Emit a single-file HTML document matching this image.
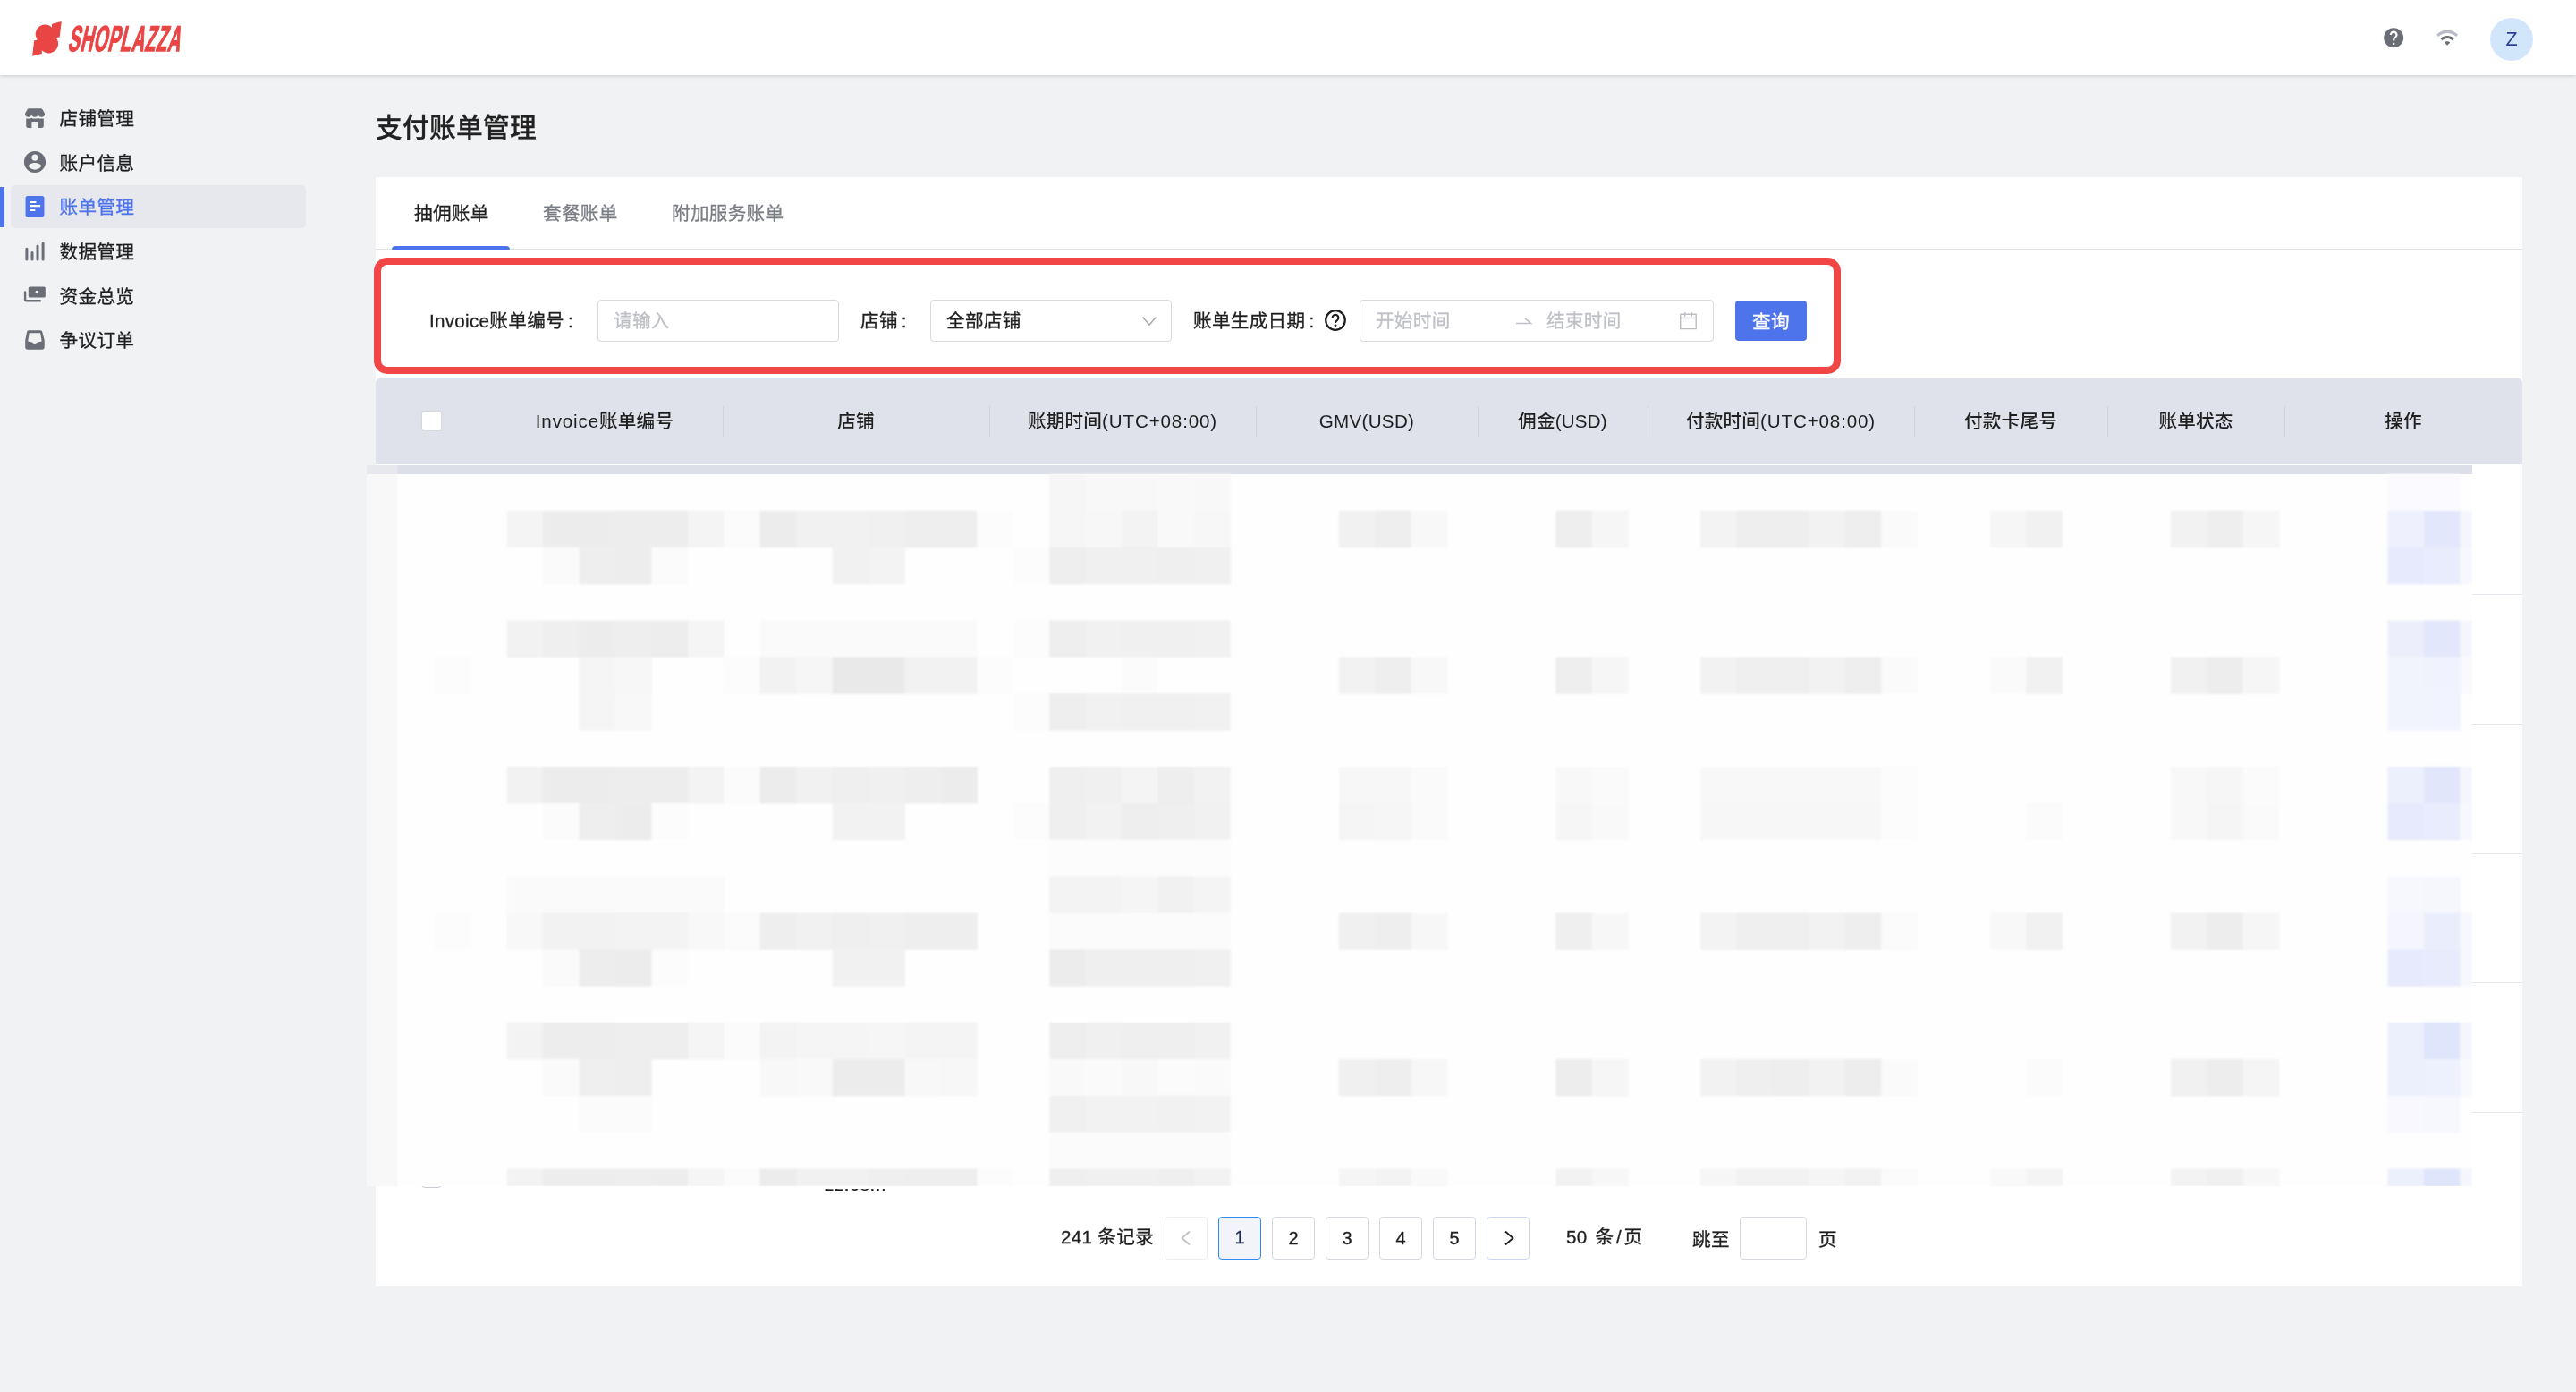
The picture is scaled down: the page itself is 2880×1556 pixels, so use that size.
<!DOCTYPE html>
<html lang="zh-CN">
<head>
<meta charset="utf-8">
<title>支付账单管理</title>
<style>
*{box-sizing:border-box;margin:0;padding:0}
html,body{width:2880px;height:1556px;overflow:hidden}
body{background:#f1f2f4;font-family:"Liberation Sans","Noto Sans CJK SC",sans-serif;color:#1f1f1f;position:relative;font-size:21px;-webkit-text-stroke:.3px}
#root{position:absolute;left:0;top:0;width:2880px;height:1556px;will-change:transform}
.abs{position:absolute}
svg{display:block}
/* header */
#hdr{position:absolute;left:0;top:0;width:2880px;height:84px;background:#fff;box-shadow:0 1px 4px rgba(0,0,0,.17);z-index:5}
#logo-ico{position:absolute;left:34px;top:22px}
#logo-txt{position:absolute;left:84px;top:19.3px;font:bold 40px/48px "Liberation Sans",sans-serif;color:#ea4545;transform-origin:0 0;transform:skewX(-13deg) scaleX(.487);white-space:nowrap;-webkit-text-stroke:1.5px #ea4545;letter-spacing:1.6px}
#help{position:absolute;left:2662.8px;top:28.8px}
#wifi{position:absolute;left:2722.9px;top:29.2px}
#avatar{position:absolute;left:2784px;top:20px;width:48px;height:48px;border-radius:50%;background:#d1e6fa;color:#2a3f98;font-size:21.5px;line-height:49px;text-align:center;-webkit-text-stroke:0}
/* sidebar */
#nav{position:absolute;left:0;top:0;width:360px}
.ni{position:absolute;left:12px;width:330px;height:48px;border-radius:5px;font-size:20.6px;line-height:48px;color:#1f1f1f;letter-spacing:.3px}
.ni span{position:absolute;left:54.6px;top:1.4px;white-space:nowrap}
.ni svg{position:absolute;left:13px;top:10px}
.ni.on{background:#e7e8ed;color:#4e74ec}
#navbar{position:absolute;left:0;top:209px;width:5px;height:45px;background:#4e74ec}
/* main */
h1{position:absolute;left:420px;top:120.6px;font-size:29.7px;line-height:44px;font-weight:500;color:#222;white-space:nowrap;letter-spacing:.3px}
#card{position:absolute;left:420px;top:198px;width:2400px;height:1240px;background:#fff}

/* tabs */
#tabs{position:absolute;left:420px;top:198px;width:2400px;height:81px;border-bottom:1px solid #e4e5e9}
.tab{position:absolute;top:0;height:81px;line-height:81px;font-size:20.6px;color:#7a7d85;white-space:nowrap;letter-spacing:.3px}
.tab.on{color:#1f1f1f}
#ink{position:absolute;left:438px;top:275px;width:132px;height:4px;background:#4e74ec;border-radius:4px 4px 0 0}
/* filter */
#redbox{position:absolute;left:418px;top:288px;width:1640px;height:130px;border:8px solid #f24646;border-radius:15px;z-index:3}
.lbl{position:absolute;top:335.4px;height:47px;line-height:47px;font-size:20.6px;color:#1f1f1f;white-space:nowrap;letter-spacing:.3px}
.inp{position:absolute;top:335px;height:47px;border:1px solid #d8d9dd;border-radius:4px;background:#fff;font-size:20.6px;line-height:45px;color:#bfc1c7;white-space:nowrap;letter-spacing:.3px}
.inp span{position:absolute;top:.4px}
#btn{position:absolute;left:1940px;top:336px;width:80px;height:45px;border-radius:5px;background:#4e74ec;color:#fff;font-size:20.6px;line-height:47px;text-align:center;letter-spacing:.5px;border-radius:4px}
/* table */
#thead{position:absolute;left:420px;top:423px;width:2400px;height:96px;background:#dfe2ea;border-radius:5px 5px 0 0}
.th{position:absolute;top:0;height:96px;line-height:96px;text-align:center;font-size:20.6px;font-weight:500;color:#1f1f1f;white-space:nowrap;letter-spacing:.2px;-webkit-text-stroke:0}
.sep{position:absolute;top:31px;width:1px;height:34px;background:#cfd2da}
#cb{position:absolute;left:50.5px;top:36px;width:23px;height:23px;background:#fff;border:1px solid #d4d7de;border-radius:3px}
.rl{position:absolute;left:2764px;width:56px;height:1px;background:#e6e7ec}
/* pagination */
.pg{position:absolute;top:1360px;width:48px;height:48px;border:1px solid #d6d8dd;border-radius:4px;background:#fff;font-size:20px;line-height:46px;text-align:center;color:#1f1f1f}
.pg.on{border:1.6px solid #2f8cf5;background:#f3f4f9;line-height:44.8px;color:#1f2a4d}
.pt{position:absolute;top:1359.4px;height:48px;line-height:48px;font-size:20.6px;color:#1f1f1f;white-space:nowrap;letter-spacing:.3px}
#mosaic{position:absolute;left:410px;top:520px;z-index:2}
.lt{letter-spacing:.85px}
@media (max-width:2000px){html,body{width:1440px;height:778px}#root{zoom:.5}}
</style>
</head>
<body>
<div id="root">
<div id="hdr">
  <svg id="logo-ico" width="38" height="44" viewBox="0 0 38 44"><g fill="#ea4545"><circle cx="16.4" cy="16.3" r="10.7"/><circle cx="20.4" cy="26.7" r="10.7"/><path d="M24 4.7L34.8 2L32.6 19.4L24 21Z"/><path d="M4.2 23.3L2.1 40.8L12.8 38L13 22Z"/></g></svg>
  <div id="logo-txt">SHOPLAZZA</div>
  <svg id="help" width="26.4" height="26.4" viewBox="0 0 24 24"><path fill="#6b6e76" d="M12 2C6.48 2 2 6.48 2 12s4.48 10 10 10 10-4.48 10-10S17.52 2 12 2zm1 17h-2v-2h2v2zm2.07-7.75l-.9.92C13.45 12.9 13 13.5 13 15h-2v-.5c0-1.1.45-2.1 1.17-2.83l1.24-1.26c.37-.36.59-.86.59-1.41 0-1.1-.9-2-2-2s-2 .9-2 2H8c0-2.21 1.79-4 4-4s4 1.79 4 4c0 .88-.36 1.68-.93 2.25z"/></svg>
  <svg id="wifi" width="26.2" height="26.2" viewBox="0 0 24 24"><path fill="#b9bcc4" d="M1 9l2 2c4.97-4.97 13.03-4.97 18 0l2-2C16.93 2.93 7.08 2.93 1 9z"/><path fill="#6b6e76" d="M9 17l3 3 3-3c-1.65-1.66-4.34-1.66-6 0zm-4-4l2 2c2.76-2.76 7.24-2.76 10 0l2-2C15.14 9.14 8.87 9.14 5 13z"/></svg>
  <div id="avatar">Z</div>
</div>
<div id="nav">
  <div id="navbar"></div>
  <div class="ni" style="top:107.80px"><svg width="28" height="28" viewBox="0 0 28 28"><path fill="#6b6e76" d="M7.4 3.16H20.6Q22 3.16 22.6 4.4L25.1 9.05A3.7 3.7 0 0 1 17.7 9.05A3.675 3.675 0 0 1 10.35 9.05A3.675 3.675 0 0 1 3 9.05L5.4 4.4Q6 3.16 7.4 3.16Z"/><path fill="#6b6e76" d="M4.2 14.6H9L10.4 13.8L11.8 14.6H16.1L17.5 13.8L18.9 14.6H23.8V22.5a2.5 2.5 0 0 1-2.5 2.5H17.5V18.7a.6.6 0 0 0-.6-.6H11a.6.6 0 0 0-.6.6V25H6.7a2.5 2.5 0 0 1-2.5-2.5Z"/></svg><span>店铺管理</span></div>
  <div class="ni" style="top:157.42px"><svg width="28" height="28" viewBox="0 0 28 28"><path fill="#6b6e76" transform="translate(14 14) scale(1.21) translate(-12 -12)" d="M12 2C6.48 2 2 6.48 2 12s4.48 10 10 10 10-4.48 10-10S17.52 2 12 2zm0 3c1.66 0 3 1.34 3 3s-1.34 3-3 3-3-1.34-3-3 1.34-3 3-3zm0 14.2c-2.5 0-4.71-1.28-6-3.22.03-1.99 4-3.08 6-3.08 1.99 0 5.97 1.09 6 3.08-1.29 1.94-3.5 3.22-6 3.22z"/></svg><span>账户信息</span></div>
  <div class="ni on" style="top:207.04px"><svg width="28" height="28" viewBox="0 0 28 28"><rect x="3.55" y="1.9" width="20.9" height="24.2" rx="2.5" fill="#4e74ec"/><path fill="#fff" d="M8.25 7.9h7.2v2.1h-7.2zM8.25 12.1h11.9v2.2H8.25zM8.25 17h6.1v2h-6.1z"/></svg><span>账单管理</span></div>
  <div class="ni" style="top:256.66px"><svg width="28" height="28" viewBox="0 0 28 28"><path fill="none" stroke="#6b6e76" stroke-width="3" stroke-linecap="round" d="M4.9 11.2V23M11 15.6V23M17 8.1V23M23.1 5V23"/></svg><span>数据管理</span></div>
  <div class="ni" style="top:306.28px"><svg style="margin-top:-.9px" width="28" height="28" viewBox="0 0 28 28"><rect x="6.8" y="5.4" width="19" height="12.2" rx="1.6" fill="#6b6e76"/><circle cx="16.3" cy="11.6" r="1.75" fill="#f7f7f8"/><path fill="none" stroke="#6b6e76" stroke-width="2.4" stroke-linejoin="round" stroke-linecap="round" d="M3.1 11.4V19.8a1.5 1.5 0 0 0 1.5 1.5H19.8"/></svg><span>资金总览</span></div>
  <div class="ni" style="top:355.90px"><svg width="28" height="28" viewBox="0 0 28 28"><path fill="#6b6e76" fill-rule="evenodd" d="M6.8 3.3H20.4Q21.9 3.3 22.4 5.2L24.7 14.2V22a2.8 2.8 0 0 1-2.8 2.8H6a2.8 2.8 0 0 1-2.8-2.8V14.2L5.06 5.2Q5.5 3.3 6.8 3.3ZM7.7 6.3H20.1L21.7 15.4L17.3 16.4L13.7 18.4L10.7 16.4L6.2 15.4Z"/></svg><span>争议订单</span></div>
</div>
<h1>支付账单管理</h1>
<div id="card"></div>
<div id="tabs">
  <div class="tab on" style="left:43px">抽佣账单</div>
  <div class="tab" style="left:187px">套餐账单</div>
  <div class="tab" style="left:331px">附加服务账单</div>
</div>
<div id="ink"></div>
<div id="filter">
  <div class="lbl" style="left:480px">Invoice账单编号<span style="margin-left:4px">:</span></div>
  <div class="inp" style="left:668px;width:270px"><span style="left:17px">请输入</span></div>
  <div class="lbl" style="left:962px">店铺<span style="margin-left:4px">:</span></div>
  <div class="inp" style="left:1040px;width:270px"><span style="left:17px;color:#1f1f1f">全部店铺</span>
    <svg class="abs" style="left:235px;top:17px" width="18" height="12" viewBox="0 0 18 12"><path d="M1.5 1.5L9 10L16.5 1.5" fill="none" stroke="#a9abb1" stroke-width="1.5"/></svg></div>
  <div class="lbl" style="left:1334px">账单生成日期<span style="margin-left:4px">:</span></div>
  <svg class="abs" style="left:1479.8px;top:344.9px" width="26" height="26" viewBox="0 0 26 26"><circle cx="13" cy="13" r="10.8" fill="none" stroke="#1f1f1f" stroke-width="2.2"/><path d="M9.6 10.3a3.4 3.4 0 1 1 5.3 2.8c-1.2.8-1.9 1.4-1.9 2.9" fill="none" stroke="#1f1f1f" stroke-width="2.1"/><circle cx="13" cy="18.8" r="1.4" fill="#1f1f1f"/></svg>
  <div class="inp" style="left:1520px;width:396px"><span style="left:17px">开始时间</span><span style="left:208px">结束时间</span>
    <svg class="abs" style="left:173px;top:16px" width="22" height="14" viewBox="0 0 22 14"><path d="M1 9.5H17.5L11 3.8" fill="none" stroke="#bfc1c7" stroke-width="1.6"/></svg>
    <svg class="abs" style="left:356px;top:12px" width="22" height="22" viewBox="0 0 22 22"><path d="M1.7 3.3H19.2V19.6H1.7ZM1.7 7.5H19.2M6.7 1V5.7M14.3 1V5.7" fill="none" stroke="#bcbec4" stroke-width="1.4"/></svg></div>
  <div id="btn">查询</div>
</div>
<div id="redbox"></div>
<div id="thead">
  <div id="cb"></div>
  <div class="th" style="left:124px;width:264px"><span class="lt">Invoice</span>账单编号</div>
  <div class="th" style="left:388px;width:298px">店铺</div>
  <div class="th" style="left:686px;width:298px">账期时间<span class="lt">(UTC+08:00)</span></div>
  <div class="th" style="left:984px;width:248px"><span style="letter-spacing:.3px">GMV(USD)</span></div>
  <div class="th" style="left:1232px;width:190px">佣金(USD)</div>
  <div class="th" style="left:1422px;width:298px">付款时间<span class="lt">(UTC+08:00)</span></div>
  <div class="th" style="left:1720px;width:216px">付款卡尾号</div>
  <div class="th" style="left:1936px;width:198px">账单状态</div>
  <div class="th" style="left:2134px;width:266px">操作</div>
  <div class="sep" style="left:388px"></div><div class="sep" style="left:686px"></div><div class="sep" style="left:984px"></div><div class="sep" style="left:1232px"></div><div class="sep" style="left:1422px"></div><div class="sep" style="left:1720px"></div><div class="sep" style="left:1936px"></div><div class="sep" style="left:2134px"></div>
</div>
<div class="rl" style="top:664px"></div><div class="rl" style="top:809px"></div><div class="rl" style="top:954px"></div><div class="rl" style="top:1098px"></div><div class="rl" style="top:1243px"></div>
<div class="abs" style="left:470.5px;top:1305px;width:23px;height:23px;border:1px solid #c9ccd3;border-radius:4px;background:#fff"></div>
<div class="abs" style="left:922px;top:1329px;width:72px;height:2.2px;overflow:hidden"><div style="position:absolute;left:0;top:-16.6px;font-size:20.6px;line-height:24px;white-space:nowrap;color:#1f1f1f;letter-spacing:.6px">zz.com</div></div>
<svg id="mosaic" width="2354" height="806" viewBox="410 520 2354 806">
<rect x="410" y="520" width="2354" height="806" fill="#fefefe"/>
<rect x="410" y="520" width="2354" height="10.0" fill="#dddfe8"/>
<rect x="410" y="520" width="34.5" height="10.0" fill="#e7e8ed"/>
<rect x="410" y="530.0" width="34.5" height="796.0" fill="#f8f8f8"/>
<g filter="url(#mb)">
<rect x="1173.2" y="530.0" width="40.9" height="41.4" fill="#f6f6f6"/>
<rect x="1213.7" y="530.0" width="81.4" height="41.4" fill="#f8f8f8"/>
<rect x="1294.5" y="530.0" width="40.9" height="41.4" fill="#f9f9f9"/>
<rect x="1335.0" y="530.0" width="40.9" height="41.4" fill="#f8f8f8"/>
<rect x="2669.5" y="530.0" width="40.9" height="41.4" fill="#fafaff"/>
<rect x="2709.9" y="530.0" width="40.9" height="41.4" fill="#fbfbff"/>
<rect x="566.6" y="570.9" width="40.9" height="41.4" fill="#f4f4f4"/>
<rect x="607.1" y="570.9" width="81.4" height="41.4" fill="#ececec"/>
<rect x="687.9" y="570.9" width="81.4" height="41.4" fill="#ededed"/>
<rect x="768.8" y="570.9" width="40.9" height="41.4" fill="#f4f4f4"/>
<rect x="809.3" y="570.9" width="40.9" height="41.4" fill="#fbfbfb"/>
<rect x="849.7" y="570.9" width="40.9" height="41.4" fill="#ececec"/>
<rect x="890.1" y="570.9" width="81.4" height="41.4" fill="#f1f1f1"/>
<rect x="971.0" y="570.9" width="40.9" height="41.4" fill="#f0f0f0"/>
<rect x="1011.5" y="570.9" width="81.4" height="41.4" fill="#eeeeee"/>
<rect x="1092.3" y="570.9" width="40.9" height="41.4" fill="#fcfcfc"/>
<rect x="1173.2" y="570.9" width="40.9" height="41.4" fill="#f6f6f6"/>
<rect x="1213.7" y="570.9" width="40.9" height="41.4" fill="#f7f7f7"/>
<rect x="1254.1" y="570.9" width="40.9" height="41.4" fill="#f3f3f3"/>
<rect x="1294.5" y="570.9" width="40.9" height="41.4" fill="#f9f9f9"/>
<rect x="1335.0" y="570.9" width="40.9" height="41.4" fill="#f7f7f7"/>
<rect x="1496.7" y="570.9" width="40.9" height="41.4" fill="#f1f1f1"/>
<rect x="1537.2" y="570.9" width="40.9" height="41.4" fill="#eeeeee"/>
<rect x="1577.6" y="570.9" width="40.9" height="41.4" fill="#f8f8f8"/>
<rect x="1739.4" y="570.9" width="40.9" height="41.4" fill="#eeeeee"/>
<rect x="1779.8" y="570.9" width="40.9" height="41.4" fill="#f6f6f6"/>
<rect x="1901.1" y="570.9" width="40.9" height="41.4" fill="#f3f3f3"/>
<rect x="1941.6" y="570.9" width="81.4" height="41.4" fill="#eeeeee"/>
<rect x="2022.5" y="570.9" width="40.9" height="41.4" fill="#f2f2f2"/>
<rect x="2062.9" y="570.9" width="40.9" height="41.4" fill="#eeeeee"/>
<rect x="2103.3" y="570.9" width="40.9" height="41.4" fill="#fafafa"/>
<rect x="2224.7" y="570.9" width="40.9" height="41.4" fill="#f6f6f6"/>
<rect x="2265.1" y="570.9" width="40.9" height="41.4" fill="#f1f1f1"/>
<rect x="2426.9" y="570.9" width="40.9" height="41.4" fill="#f2f2f2"/>
<rect x="2467.3" y="570.9" width="40.9" height="41.4" fill="#eeeeee"/>
<rect x="2507.7" y="570.9" width="40.9" height="41.4" fill="#f6f6f6"/>
<rect x="2669.5" y="570.9" width="40.9" height="41.4" fill="#eef1fd"/>
<rect x="2709.9" y="570.9" width="40.9" height="41.4" fill="#e2e7fb"/>
<rect x="2750.4" y="570.9" width="14.1" height="41.4" fill="#f5f6fd"/>
<rect x="607.1" y="611.7" width="40.9" height="41.4" fill="#fafafa"/>
<rect x="647.5" y="611.7" width="40.9" height="41.4" fill="#eeeeee"/>
<rect x="687.9" y="611.7" width="40.9" height="41.4" fill="#ededed"/>
<rect x="728.4" y="611.7" width="40.9" height="41.4" fill="#fbfbfb"/>
<rect x="930.6" y="611.7" width="40.9" height="41.4" fill="#f1f1f1"/>
<rect x="971.0" y="611.7" width="40.9" height="41.4" fill="#f3f3f3"/>
<rect x="1132.8" y="611.7" width="40.9" height="41.4" fill="#fcfcfc"/>
<rect x="1173.2" y="611.7" width="40.9" height="41.4" fill="#eeeeee"/>
<rect x="1213.7" y="611.7" width="81.4" height="41.4" fill="#f0f0f0"/>
<rect x="1294.5" y="611.7" width="40.9" height="41.4" fill="#efefef"/>
<rect x="1335.0" y="611.7" width="40.9" height="41.4" fill="#f0f0f0"/>
<rect x="2669.5" y="611.7" width="40.9" height="41.4" fill="#e6eafc"/>
<rect x="2709.9" y="611.7" width="40.9" height="41.4" fill="#e8ecfc"/>
<rect x="2750.4" y="611.7" width="14.1" height="41.4" fill="#f7f8fe"/>
<rect x="566.6" y="693.5" width="40.9" height="41.4" fill="#f2f2f2"/>
<rect x="607.1" y="693.5" width="40.9" height="41.4" fill="#efefef"/>
<rect x="647.5" y="693.5" width="40.9" height="41.4" fill="#ececec"/>
<rect x="687.9" y="693.5" width="40.9" height="41.4" fill="#eeeeee"/>
<rect x="728.4" y="693.5" width="40.9" height="41.4" fill="#ededed"/>
<rect x="768.8" y="693.5" width="40.9" height="41.4" fill="#f5f5f5"/>
<rect x="849.7" y="693.5" width="243.1" height="41.4" fill="#fafafa"/>
<rect x="1132.8" y="693.5" width="40.9" height="41.4" fill="#fcfcfc"/>
<rect x="1173.2" y="693.5" width="40.9" height="41.4" fill="#eeeeee"/>
<rect x="1213.7" y="693.5" width="40.9" height="41.4" fill="#f1f1f1"/>
<rect x="1254.1" y="693.5" width="81.4" height="41.4" fill="#f0f0f0"/>
<rect x="1335.0" y="693.5" width="40.9" height="41.4" fill="#f1f1f1"/>
<rect x="2669.5" y="693.5" width="40.9" height="41.4" fill="#eceffb"/>
<rect x="2709.9" y="693.5" width="40.9" height="41.4" fill="#e2e7fb"/>
<rect x="2750.4" y="693.5" width="14.1" height="41.4" fill="#f5f6fd"/>
<rect x="485.7" y="734.4" width="40.9" height="41.4" fill="#fcfcfc"/>
<rect x="647.5" y="734.4" width="40.9" height="41.4" fill="#f5f5f5"/>
<rect x="687.9" y="734.4" width="40.9" height="41.4" fill="#f7f7f7"/>
<rect x="809.3" y="734.4" width="40.9" height="41.4" fill="#fcfcfc"/>
<rect x="849.7" y="734.4" width="40.9" height="41.4" fill="#f2f2f2"/>
<rect x="890.1" y="734.4" width="40.9" height="41.4" fill="#f6f6f6"/>
<rect x="930.6" y="734.4" width="81.4" height="41.4" fill="#e9e9e9"/>
<rect x="1011.5" y="734.4" width="81.4" height="41.4" fill="#f2f2f2"/>
<rect x="1092.3" y="734.4" width="40.9" height="41.4" fill="#fcfcfc"/>
<rect x="1254.1" y="734.4" width="40.9" height="41.4" fill="#fbfbfb"/>
<rect x="1496.7" y="734.4" width="40.9" height="41.4" fill="#f2f2f2"/>
<rect x="1537.2" y="734.4" width="40.9" height="41.4" fill="#eeeeee"/>
<rect x="1577.6" y="734.4" width="40.9" height="41.4" fill="#f8f8f8"/>
<rect x="1739.4" y="734.4" width="40.9" height="41.4" fill="#eeeeee"/>
<rect x="1779.8" y="734.4" width="40.9" height="41.4" fill="#f6f6f6"/>
<rect x="1901.1" y="734.4" width="40.9" height="41.4" fill="#f2f2f2"/>
<rect x="1941.6" y="734.4" width="81.4" height="41.4" fill="#efefef"/>
<rect x="2022.5" y="734.4" width="40.9" height="41.4" fill="#f2f2f2"/>
<rect x="2062.9" y="734.4" width="40.9" height="41.4" fill="#eeeeee"/>
<rect x="2103.3" y="734.4" width="40.9" height="41.4" fill="#fafafa"/>
<rect x="2224.7" y="734.4" width="40.9" height="41.4" fill="#fafafa"/>
<rect x="2265.1" y="734.4" width="40.9" height="41.4" fill="#f1f1f1"/>
<rect x="2426.9" y="734.4" width="40.9" height="41.4" fill="#f1f1f1"/>
<rect x="2467.3" y="734.4" width="40.9" height="41.4" fill="#ededed"/>
<rect x="2507.7" y="734.4" width="40.9" height="41.4" fill="#f6f6f6"/>
<rect x="2669.5" y="734.4" width="40.9" height="41.4" fill="#f2f4fd"/>
<rect x="2709.9" y="734.4" width="40.9" height="41.4" fill="#f0f3fe"/>
<rect x="2750.4" y="734.4" width="14.1" height="41.4" fill="#f9f9fe"/>
<rect x="647.5" y="775.2" width="40.9" height="41.4" fill="#f5f5f5"/>
<rect x="687.9" y="775.2" width="40.9" height="41.4" fill="#f8f8f8"/>
<rect x="1132.8" y="775.2" width="40.9" height="41.4" fill="#fcfcfc"/>
<rect x="1173.2" y="775.2" width="40.9" height="41.4" fill="#eeeeee"/>
<rect x="1213.7" y="775.2" width="40.9" height="41.4" fill="#f1f1f1"/>
<rect x="1254.1" y="775.2" width="81.4" height="41.4" fill="#f0f0f0"/>
<rect x="1335.0" y="775.2" width="40.9" height="41.4" fill="#f1f1f1"/>
<rect x="2669.5" y="775.2" width="40.9" height="41.4" fill="#f2f4fd"/>
<rect x="2709.9" y="775.2" width="40.9" height="41.4" fill="#f1f4fe"/>
<rect x="566.6" y="857.0" width="40.9" height="41.4" fill="#f2f2f2"/>
<rect x="607.1" y="857.0" width="81.4" height="41.4" fill="#ececec"/>
<rect x="687.9" y="857.0" width="81.4" height="41.4" fill="#ededed"/>
<rect x="768.8" y="857.0" width="40.9" height="41.4" fill="#f3f3f3"/>
<rect x="809.3" y="857.0" width="40.9" height="41.4" fill="#fbfbfb"/>
<rect x="849.7" y="857.0" width="40.9" height="41.4" fill="#ececec"/>
<rect x="890.1" y="857.0" width="40.9" height="41.4" fill="#f1f1f1"/>
<rect x="930.6" y="857.0" width="40.9" height="41.4" fill="#efefef"/>
<rect x="971.0" y="857.0" width="40.9" height="41.4" fill="#f0f0f0"/>
<rect x="1011.5" y="857.0" width="40.9" height="41.4" fill="#eeeeee"/>
<rect x="1051.9" y="857.0" width="40.9" height="41.4" fill="#ececec"/>
<rect x="1173.2" y="857.0" width="40.9" height="41.4" fill="#efefef"/>
<rect x="1213.7" y="857.0" width="40.9" height="41.4" fill="#f0f0f0"/>
<rect x="1254.1" y="857.0" width="40.9" height="41.4" fill="#f4f4f4"/>
<rect x="1294.5" y="857.0" width="40.9" height="41.4" fill="#eeeeee"/>
<rect x="1335.0" y="857.0" width="40.9" height="41.4" fill="#f2f2f2"/>
<rect x="1496.7" y="857.0" width="81.4" height="41.4" fill="#f7f7f7"/>
<rect x="1577.6" y="857.0" width="40.9" height="41.4" fill="#fafafa"/>
<rect x="1739.4" y="857.0" width="40.9" height="41.4" fill="#f8f8f8"/>
<rect x="1779.8" y="857.0" width="40.9" height="41.4" fill="#fafafa"/>
<rect x="1901.1" y="857.0" width="202.7" height="41.4" fill="#f8f8f8"/>
<rect x="2103.3" y="857.0" width="40.9" height="41.4" fill="#fcfcfc"/>
<rect x="2426.9" y="857.0" width="40.9" height="41.4" fill="#f8f8f8"/>
<rect x="2467.3" y="857.0" width="40.9" height="41.4" fill="#f6f6f6"/>
<rect x="2507.7" y="857.0" width="40.9" height="41.4" fill="#fbfbfb"/>
<rect x="2669.5" y="857.0" width="40.9" height="41.4" fill="#eceffc"/>
<rect x="2709.9" y="857.0" width="40.9" height="41.4" fill="#e1e6fa"/>
<rect x="2750.4" y="857.0" width="14.1" height="41.4" fill="#f5f6fd"/>
<rect x="607.1" y="897.8" width="40.9" height="41.4" fill="#fbfbfb"/>
<rect x="647.5" y="897.8" width="40.9" height="41.4" fill="#eeeeee"/>
<rect x="687.9" y="897.8" width="40.9" height="41.4" fill="#ececec"/>
<rect x="728.4" y="897.8" width="40.9" height="41.4" fill="#fcfcfc"/>
<rect x="930.6" y="897.8" width="81.4" height="41.4" fill="#f2f2f2"/>
<rect x="1132.8" y="897.8" width="40.9" height="41.4" fill="#fcfcfc"/>
<rect x="1173.2" y="897.8" width="40.9" height="41.4" fill="#efefef"/>
<rect x="1213.7" y="897.8" width="40.9" height="41.4" fill="#f2f2f2"/>
<rect x="1254.1" y="897.8" width="40.9" height="41.4" fill="#eeeeee"/>
<rect x="1294.5" y="897.8" width="40.9" height="41.4" fill="#efefef"/>
<rect x="1335.0" y="897.8" width="40.9" height="41.4" fill="#f1f1f1"/>
<rect x="1496.7" y="897.8" width="40.9" height="41.4" fill="#f5f5f5"/>
<rect x="1537.2" y="897.8" width="40.9" height="41.4" fill="#f6f6f6"/>
<rect x="1577.6" y="897.8" width="40.9" height="41.4" fill="#fafafa"/>
<rect x="1739.4" y="897.8" width="40.9" height="41.4" fill="#f6f6f6"/>
<rect x="1779.8" y="897.8" width="40.9" height="41.4" fill="#f9f9f9"/>
<rect x="1901.1" y="897.8" width="202.7" height="41.4" fill="#f7f7f7"/>
<rect x="2103.3" y="897.8" width="40.9" height="41.4" fill="#fcfcfc"/>
<rect x="2265.1" y="897.8" width="40.9" height="41.4" fill="#fbfbfb"/>
<rect x="2426.9" y="897.8" width="40.9" height="41.4" fill="#f8f8f8"/>
<rect x="2467.3" y="897.8" width="40.9" height="41.4" fill="#f5f5f5"/>
<rect x="2507.7" y="897.8" width="40.9" height="41.4" fill="#fafafa"/>
<rect x="2669.5" y="897.8" width="40.9" height="41.4" fill="#e6eafc"/>
<rect x="2709.9" y="897.8" width="40.9" height="41.4" fill="#e8ecfc"/>
<rect x="2750.4" y="897.8" width="14.1" height="41.4" fill="#f7f8fe"/>
<rect x="1173.2" y="938.7" width="202.7" height="41.4" fill="#fcfcfc"/>
<rect x="566.6" y="979.6" width="243.1" height="41.4" fill="#fafafa"/>
<rect x="1173.2" y="979.6" width="81.4" height="41.4" fill="#f3f3f3"/>
<rect x="1254.1" y="979.6" width="40.9" height="41.4" fill="#f5f5f5"/>
<rect x="1294.5" y="979.6" width="40.9" height="41.4" fill="#f1f1f1"/>
<rect x="1335.0" y="979.6" width="40.9" height="41.4" fill="#f4f4f4"/>
<rect x="2669.5" y="979.6" width="40.9" height="41.4" fill="#f7f8fe"/>
<rect x="2709.9" y="979.6" width="40.9" height="41.4" fill="#f6f7fd"/>
<rect x="485.7" y="1020.4" width="40.9" height="41.4" fill="#fcfcfc"/>
<rect x="566.6" y="1020.4" width="40.9" height="41.4" fill="#f8f8f8"/>
<rect x="607.1" y="1020.4" width="81.4" height="41.4" fill="#f2f2f2"/>
<rect x="687.9" y="1020.4" width="81.4" height="41.4" fill="#f3f3f3"/>
<rect x="768.8" y="1020.4" width="40.9" height="41.4" fill="#f8f8f8"/>
<rect x="809.3" y="1020.4" width="40.9" height="41.4" fill="#fbfbfb"/>
<rect x="849.7" y="1020.4" width="40.9" height="41.4" fill="#eeeeee"/>
<rect x="890.1" y="1020.4" width="40.9" height="41.4" fill="#f1f1f1"/>
<rect x="930.6" y="1020.4" width="40.9" height="41.4" fill="#efefef"/>
<rect x="971.0" y="1020.4" width="40.9" height="41.4" fill="#f0f0f0"/>
<rect x="1011.5" y="1020.4" width="81.4" height="41.4" fill="#eeeeee"/>
<rect x="1173.2" y="1020.4" width="202.7" height="41.4" fill="#fbfbfb"/>
<rect x="1496.7" y="1020.4" width="40.9" height="41.4" fill="#f0f0f0"/>
<rect x="1537.2" y="1020.4" width="40.9" height="41.4" fill="#eeeeee"/>
<rect x="1577.6" y="1020.4" width="40.9" height="41.4" fill="#f7f7f7"/>
<rect x="1739.4" y="1020.4" width="40.9" height="41.4" fill="#efefef"/>
<rect x="1779.8" y="1020.4" width="40.9" height="41.4" fill="#f7f7f7"/>
<rect x="1901.1" y="1020.4" width="40.9" height="41.4" fill="#f3f3f3"/>
<rect x="1941.6" y="1020.4" width="81.4" height="41.4" fill="#efefef"/>
<rect x="2022.5" y="1020.4" width="40.9" height="41.4" fill="#f2f2f2"/>
<rect x="2062.9" y="1020.4" width="40.9" height="41.4" fill="#eeeeee"/>
<rect x="2103.3" y="1020.4" width="40.9" height="41.4" fill="#fbfbfb"/>
<rect x="2224.7" y="1020.4" width="40.9" height="41.4" fill="#f8f8f8"/>
<rect x="2265.1" y="1020.4" width="40.9" height="41.4" fill="#f1f1f1"/>
<rect x="2426.9" y="1020.4" width="40.9" height="41.4" fill="#f2f2f2"/>
<rect x="2467.3" y="1020.4" width="40.9" height="41.4" fill="#ededed"/>
<rect x="2507.7" y="1020.4" width="40.9" height="41.4" fill="#f6f6f6"/>
<rect x="2669.5" y="1020.4" width="40.9" height="41.4" fill="#f4f5fd"/>
<rect x="2709.9" y="1020.4" width="40.9" height="41.4" fill="#eaeefc"/>
<rect x="2750.4" y="1020.4" width="14.1" height="41.4" fill="#f7f8fe"/>
<rect x="607.1" y="1061.3" width="40.9" height="41.4" fill="#fafafa"/>
<rect x="647.5" y="1061.3" width="40.9" height="41.4" fill="#ededed"/>
<rect x="687.9" y="1061.3" width="40.9" height="41.4" fill="#ececec"/>
<rect x="728.4" y="1061.3" width="40.9" height="41.4" fill="#fcfcfc"/>
<rect x="930.6" y="1061.3" width="81.4" height="41.4" fill="#f1f1f1"/>
<rect x="1173.2" y="1061.3" width="40.9" height="41.4" fill="#ececec"/>
<rect x="1213.7" y="1061.3" width="121.8" height="41.4" fill="#efefef"/>
<rect x="1335.0" y="1061.3" width="40.9" height="41.4" fill="#f0f0f0"/>
<rect x="2669.5" y="1061.3" width="40.9" height="41.4" fill="#e6eafc"/>
<rect x="2709.9" y="1061.3" width="40.9" height="41.4" fill="#e7ebfc"/>
<rect x="2750.4" y="1061.3" width="14.1" height="41.4" fill="#f7f8fe"/>
<rect x="566.6" y="1143.0" width="40.9" height="41.4" fill="#f3f3f3"/>
<rect x="607.1" y="1143.0" width="81.4" height="41.4" fill="#ededed"/>
<rect x="687.9" y="1143.0" width="81.4" height="41.4" fill="#eeeeee"/>
<rect x="768.8" y="1143.0" width="40.9" height="41.4" fill="#f5f5f5"/>
<rect x="809.3" y="1143.0" width="40.9" height="41.4" fill="#fbfbfb"/>
<rect x="849.7" y="1143.0" width="40.9" height="41.4" fill="#f3f3f3"/>
<rect x="890.1" y="1143.0" width="81.4" height="41.4" fill="#f5f5f5"/>
<rect x="971.0" y="1143.0" width="40.9" height="41.4" fill="#f6f6f6"/>
<rect x="1011.5" y="1143.0" width="81.4" height="41.4" fill="#f4f4f4"/>
<rect x="1173.2" y="1143.0" width="40.9" height="41.4" fill="#eeeeee"/>
<rect x="1213.7" y="1143.0" width="40.9" height="41.4" fill="#f0f0f0"/>
<rect x="1254.1" y="1143.0" width="81.4" height="41.4" fill="#efefef"/>
<rect x="1335.0" y="1143.0" width="40.9" height="41.4" fill="#f1f1f1"/>
<rect x="2669.5" y="1143.0" width="40.9" height="41.4" fill="#eceffc"/>
<rect x="2709.9" y="1143.0" width="40.9" height="41.4" fill="#dfe5fa"/>
<rect x="2750.4" y="1143.0" width="14.1" height="41.4" fill="#f5f6fd"/>
<rect x="607.1" y="1183.9" width="40.9" height="41.4" fill="#fafafa"/>
<rect x="647.5" y="1183.9" width="40.9" height="41.4" fill="#efefef"/>
<rect x="687.9" y="1183.9" width="40.9" height="41.4" fill="#eeeeee"/>
<rect x="849.7" y="1183.9" width="40.9" height="41.4" fill="#f8f8f8"/>
<rect x="890.1" y="1183.9" width="40.9" height="41.4" fill="#f9f9f9"/>
<rect x="930.6" y="1183.9" width="81.4" height="41.4" fill="#ececec"/>
<rect x="1011.5" y="1183.9" width="40.9" height="41.4" fill="#f8f8f8"/>
<rect x="1051.9" y="1183.9" width="40.9" height="41.4" fill="#f7f7f7"/>
<rect x="1173.2" y="1183.9" width="40.9" height="41.4" fill="#f9f9f9"/>
<rect x="1213.7" y="1183.9" width="40.9" height="41.4" fill="#fafafa"/>
<rect x="1254.1" y="1183.9" width="40.9" height="41.4" fill="#f8f8f8"/>
<rect x="1294.5" y="1183.9" width="40.9" height="41.4" fill="#fbfbfb"/>
<rect x="1335.0" y="1183.9" width="40.9" height="41.4" fill="#fafafa"/>
<rect x="1496.7" y="1183.9" width="40.9" height="41.4" fill="#f0f0f0"/>
<rect x="1537.2" y="1183.9" width="40.9" height="41.4" fill="#eeeeee"/>
<rect x="1577.6" y="1183.9" width="40.9" height="41.4" fill="#f7f7f7"/>
<rect x="1739.4" y="1183.9" width="40.9" height="41.4" fill="#ededed"/>
<rect x="1779.8" y="1183.9" width="40.9" height="41.4" fill="#f6f6f6"/>
<rect x="1901.1" y="1183.9" width="40.9" height="41.4" fill="#f2f2f2"/>
<rect x="1941.6" y="1183.9" width="40.9" height="41.4" fill="#efefef"/>
<rect x="1982.0" y="1183.9" width="40.9" height="41.4" fill="#eeeeee"/>
<rect x="2022.5" y="1183.9" width="40.9" height="41.4" fill="#f2f2f2"/>
<rect x="2062.9" y="1183.9" width="40.9" height="41.4" fill="#ededed"/>
<rect x="2103.3" y="1183.9" width="40.9" height="41.4" fill="#fafafa"/>
<rect x="2265.1" y="1183.9" width="40.9" height="41.4" fill="#fbfbfb"/>
<rect x="2426.9" y="1183.9" width="40.9" height="41.4" fill="#f1f1f1"/>
<rect x="2467.3" y="1183.9" width="40.9" height="41.4" fill="#ededed"/>
<rect x="2507.7" y="1183.9" width="40.9" height="41.4" fill="#f5f5f5"/>
<rect x="2669.5" y="1183.9" width="40.9" height="41.4" fill="#eceffc"/>
<rect x="2709.9" y="1183.9" width="40.9" height="41.4" fill="#edf0fd"/>
<rect x="2750.4" y="1183.9" width="14.1" height="41.4" fill="#f8f9fe"/>
<rect x="647.5" y="1224.8" width="81.4" height="41.4" fill="#fbfbfb"/>
<rect x="1173.2" y="1224.8" width="40.9" height="41.4" fill="#f0f0f0"/>
<rect x="1213.7" y="1224.8" width="81.4" height="41.4" fill="#f2f2f2"/>
<rect x="1294.5" y="1224.8" width="40.9" height="41.4" fill="#f1f1f1"/>
<rect x="1335.0" y="1224.8" width="40.9" height="41.4" fill="#f2f2f2"/>
<rect x="2669.5" y="1224.8" width="40.9" height="41.4" fill="#f8f8fe"/>
<rect x="2709.9" y="1224.8" width="40.9" height="41.4" fill="#f7f8fe"/>
<rect x="1173.2" y="1265.7" width="202.7" height="41.4" fill="#fbfbfb"/>
<rect x="566.6" y="1306.5" width="40.9" height="20.0" fill="#f3f3f3"/>
<rect x="607.1" y="1306.5" width="81.4" height="20.0" fill="#ededed"/>
<rect x="687.9" y="1306.5" width="40.9" height="20.0" fill="#eeeeee"/>
<rect x="728.4" y="1306.5" width="40.9" height="20.0" fill="#ededed"/>
<rect x="768.8" y="1306.5" width="40.9" height="20.0" fill="#f5f5f5"/>
<rect x="809.3" y="1306.5" width="40.9" height="20.0" fill="#fbfbfb"/>
<rect x="849.7" y="1306.5" width="40.9" height="20.0" fill="#ececec"/>
<rect x="890.1" y="1306.5" width="81.4" height="20.0" fill="#f1f1f1"/>
<rect x="971.0" y="1306.5" width="40.9" height="20.0" fill="#efefef"/>
<rect x="1011.5" y="1306.5" width="81.4" height="20.0" fill="#eeeeee"/>
<rect x="1092.3" y="1306.5" width="40.9" height="20.0" fill="#fcfcfc"/>
<rect x="1173.2" y="1306.5" width="40.9" height="20.0" fill="#efefef"/>
<rect x="1213.7" y="1306.5" width="81.4" height="20.0" fill="#f0f0f0"/>
<rect x="1294.5" y="1306.5" width="40.9" height="20.0" fill="#efefef"/>
<rect x="1335.0" y="1306.5" width="40.9" height="20.0" fill="#f2f2f2"/>
<rect x="1496.7" y="1306.5" width="40.9" height="20.0" fill="#f5f5f5"/>
<rect x="1537.2" y="1306.5" width="40.9" height="20.0" fill="#f3f3f3"/>
<rect x="1577.6" y="1306.5" width="40.9" height="20.0" fill="#f9f9f9"/>
<rect x="1739.4" y="1306.5" width="40.9" height="20.0" fill="#f2f2f2"/>
<rect x="1779.8" y="1306.5" width="40.9" height="20.0" fill="#f7f7f7"/>
<rect x="1901.1" y="1306.5" width="40.9" height="20.0" fill="#f6f6f6"/>
<rect x="1941.6" y="1306.5" width="81.4" height="20.0" fill="#f2f2f2"/>
<rect x="2022.5" y="1306.5" width="40.9" height="20.0" fill="#f5f5f5"/>
<rect x="2062.9" y="1306.5" width="40.9" height="20.0" fill="#f2f2f2"/>
<rect x="2103.3" y="1306.5" width="40.9" height="20.0" fill="#fbfbfb"/>
<rect x="2224.7" y="1306.5" width="40.9" height="20.0" fill="#f9f9f9"/>
<rect x="2265.1" y="1306.5" width="40.9" height="20.0" fill="#f4f4f4"/>
<rect x="2426.9" y="1306.5" width="40.9" height="20.0" fill="#f3f3f3"/>
<rect x="2467.3" y="1306.5" width="40.9" height="20.0" fill="#f0f0f0"/>
<rect x="2507.7" y="1306.5" width="40.9" height="20.0" fill="#f7f7f7"/>
<rect x="2669.5" y="1306.5" width="40.9" height="20.0" fill="#eceffc"/>
<rect x="2709.9" y="1306.5" width="40.9" height="20.0" fill="#dfe5fa"/>
<rect x="2750.4" y="1306.5" width="14.1" height="20.0" fill="#f5f6fd"/>
</g>
<defs><filter id="mb" x="410" y="520" width="2354" height="806" filterUnits="userSpaceOnUse"><feGaussianBlur stdDeviation="0.9"/></filter></defs>
</svg>
<div id="pager">
  <div class="pt" style="left:1186px">241 条记录</div>
  <div class="pg" style="left:1302px;border-color:#ececee"><svg class="abs" style="left:16px;top:14px" width="14" height="18" viewBox="0 0 14 18"><path d="M11 1.5L2.5 9L11 16.5" fill="none" stroke="#bfc1c7" stroke-width="1.8"/></svg></div>
  <div class="pg on" style="left:1362px">1</div>
  <div class="pg" style="left:1422px">2</div>
  <div class="pg" style="left:1482px">3</div>
  <div class="pg" style="left:1542px">4</div>
  <div class="pg" style="left:1602px">5</div>
  <div class="pg" style="left:1662px;border-color:#cfd6f0"><svg class="abs" style="left:17px;top:14px" width="14" height="18" viewBox="0 0 14 18"><path d="M3 1.5L11.5 9L3 16.5" fill="none" stroke="#1f1f1f" stroke-width="1.8"/></svg></div>
  <div class="pt" style="left:1751px">50<span style="margin-left:3px"> </span>条<span style="margin:0 2.5px">/</span>页</div>
  <div class="pt" style="left:1892px;top:1361.5px">跳至</div>
  <div class="pg" style="left:1945px;width:75px"></div>
  <div class="pt" style="left:2033px;top:1361.5px">页</div>
</div>
</div>
</body>
</html>
